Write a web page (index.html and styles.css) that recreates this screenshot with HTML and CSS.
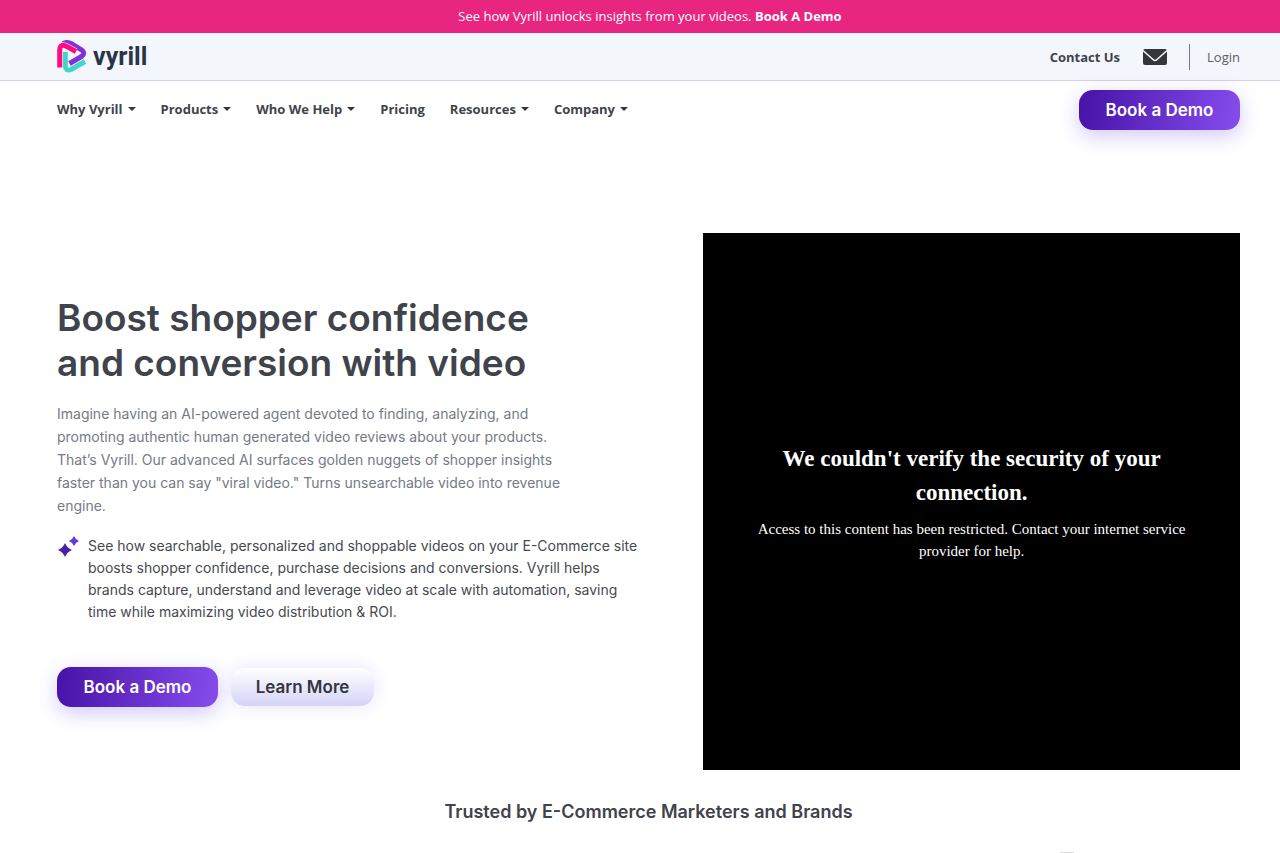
FILE: index.html
```html
<!DOCTYPE html>
<html lang="en">
<head>
<meta charset="utf-8">
<meta name="viewport" content="width=device-width, initial-scale=1">
<title>Vyrill</title>
<link rel="stylesheet" href="styles.css">
</head>
<body>
<div class="banner">See how Vyrill unlocks insights from your videos. <a href="#demo">Book A Demo</a></div>
<header>
  <div class="topbar">
    <a class="logo" href="#home">
      <svg width="30" height="33" viewBox="0 0 30 33" fill="none" stroke-width="5" stroke-linejoin="round" aria-hidden="true">
        <path d="M6 3.500 Q10 1.500 14 3.500 L24.500 9.800 Q29 13 24.500 16.500 L12.500 23.500" stroke="#8330d8"/>
        <path d="M8.300 12 V26 Q8.500 31.500 14 29.500 L28 21.500" stroke="#41d6c9"/>
        <path d="M2.700 27.500 V10 Q3 3.500 9 6 L19 11.500" stroke="#f3f6fb" stroke-width="6"/>
        <path d="M2.700 27.500 V10 Q3 3.500 9 6 L19 11.500" stroke="#ff0a84"/>
      </svg>
      <span>vyrill</span>
    </a>
    <nav class="account" aria-label="Account">
      <a class="contact" href="#contact">Contact Us</a>
      <a class="mail" href="#mail" aria-label="Email">
        <svg width="24" height="16" viewBox="0 0 24 16" aria-hidden="true">
          <rect width="24" height="16" rx="2" fill="#33363b"/>
          <path d="M0 1.500 L10 10.500 Q12 12.500 14 10.500 L24 1.500" fill="none" stroke="#f3f6fb" stroke-width="1.500"/>
        </svg>
      </a>
      <a class="login" href="#login">Login</a>
    </nav>
  </div>
  <div class="mainbar">
    <nav class="menu" aria-label="Main">
      <button class="drop">Why Vyrill</button>
      <button class="drop">Products</button>
      <button class="drop">Who We Help</button>
      <a href="#pricing">Pricing</a>
      <button class="drop">Resources</button>
      <button class="drop">Company</button>
    </nav>
    <a class="btn primary" href="#demo">Book a Demo</a>
  </div>
</header>
<main>
  <section class="hero">
    <div class="copy">
      <h1>Boost shopper confidence<br>and conversion with video</h1>
      <p class="lead">Imagine having an AI-powered agent devoted to finding, analyzing, and<br>promoting authentic human generated video reviews about your products.<br>That’s Vyrill. Our advanced AI surfaces golden nuggets of shopper insights<br>faster than you can say "viral video." Turns unsearchable video into revenue<br>engine.</p>
      <div class="point">
        <svg width="21" height="21" viewBox="0 0 21 21" aria-hidden="true">
          <path d="M7 7 Q9 12 14 14 Q9 16 7 21 Q5 16 0 14 Q5 12 7 7Z" fill="#4a1fa8"/>
          <path d="M16 0 Q17.500 3.500 21 5 Q17.500 6.500 16 10 Q14.500 6.500 11 5 Q14.500 3.500 16 0Z" fill="#6836df"/>
        </svg>
        <p>See how searchable, personalized and shoppable videos on your E-Commerce site<br>boosts shopper confidence, purchase decisions and conversions. Vyrill helps<br>brands capture, understand and leverage video at scale with automation, saving<br>time while maximizing video distribution &amp; ROI.</p>
      </div>
      <div class="actions">
        <a class="btn primary" href="#demo">Book a Demo</a>
        <a class="btn secondary" href="#more">Learn More</a>
      </div>
    </div>
    <div class="video">
      <h2>We couldn't verify the security of your connection.</h2>
      <p>Access to this content has been restricted. Contact your internet service provider for help.</p>
    </div>
  </section>
  <section class="trusted">
    <h2>Trusted by E-Commerce Marketers and Brands</h2>
    <div class="brands"><span class="brand"></span></div>
  </section>
</main>
</body>
</html>
```
FILE: styles.css
```css
* { box-sizing: border-box; }
body {
  margin: 0;
  background: #fff;
  color: #3f434b;
  font-family: "Open Sans", "Noto Sans", sans-serif;
  font-size: 13px;
}
h1, h2, p { margin: 0; }
a { color: inherit; text-decoration: none; }
svg { display: block; flex: none; }

.banner {
  padding: 8px 20px 8px 40px;
  background: #e92582;
  color: #fff;
  text-align: center;
  line-height: 17px;
}
.banner a { font-weight: 700; }

.topbar, .mainbar {
  display: flex;
  align-items: center;
  justify-content: space-between;
  padding: 0 40px 0 57px;
}
.topbar {
  height: 48px;
  background: #f3f6fb;
  border-bottom: 1px solid #d2cff5;
}
.logo {
  display: flex;
  align-items: center;
  gap: 6px;
  color: #27344a;
  font: 700 25px/32px Roboto, sans-serif;
}
.account { display: flex; align-items: center; }
.contact { font-weight: 700; margin-right: 23px; }
.mail { margin-right: 22px; }
.login {
  border-left: 1px solid #777b84;
  padding-left: 17px;
  line-height: 26px;
  color: #5b5e65;
}

.mainbar { height: 58px; }
.menu { display: flex; align-items: center; gap: 25px; padding-bottom: 2px; }
.menu a, .menu button {
  display: flex;
  align-items: center;
  gap: 5px;
  padding: 0;
  border: 0;
  background: none;
  color: #3f434b;
  font: 700 13px/18px "Open Sans", sans-serif;
}
.drop::after {
  content: "";
  border: 4px solid transparent;
  border-top-color: #33363b;
  border-bottom: 0;
}

.btn {
  display: inline-block;
  border-radius: 14px;
  font: 600 17px/24px Inter, sans-serif;
  text-align: center;
  white-space: nowrap;
}
.primary {
  min-width: 161px;
  padding: 8px 24px;
  background: linear-gradient(100deg, #4612a6, #864dee);
  color: #fff;
  box-shadow: 0 6px 20px rgba(88, 60, 240, 0.28);
}
.secondary {
  min-width: 143px;
  padding: 7px 24px;
  background: linear-gradient(#fff, #d5d3f7);
  color: #33363f;
  box-shadow: 0 0 18px rgba(88, 60, 240, 0.14);
}

.hero {
  display: grid;
  grid-template-columns: 6fr 5fr;
  column-gap: 2px;
  align-items: center;
  padding: 94px 40px 0 57px;
}
h1 {
  font: 600 37px/45px Inter, sans-serif;
  color: #3f434b;
}
.lead {
  margin-top: 17px;
  font: 400 14px/23px Inter, sans-serif;
  color: #757a86;
  white-space: nowrap;
}
.point {
  display: flex;
  gap: 9px;
  margin-top: 18px;
  font: 400 14px/22px Inter, sans-serif;
  color: #454951;
  white-space: nowrap;
}
.point svg { margin: 1px 0 0 1px; }
.actions { display: flex; align-items: center; gap: 13px; margin-top: 44px; }

.video {
  display: flex;
  flex-direction: column;
  justify-content: center;
  aspect-ratio: 1;
  padding: 2px 54px 0;
  background: #000;
  color: #fff;
  text-align: center;
  font-family: "Liberation Serif", serif;
}
.video h2 { padding: 0 20px; font-size: 23px; line-height: 34px; }
.video p { margin-top: 8px; font-size: 15px; line-height: 22px; }

.trusted { padding: 28px 40px 0 57px; text-align: center; }
.trusted h2 { font: 600 18px/28px Inter, sans-serif; }
.brands {
  display: flex;
  justify-content: flex-end;
  margin-top: 26px;
  padding-right: 14%;
}
.brand { width: 14px; height: 1px; background: #dcdcdc; }
```
